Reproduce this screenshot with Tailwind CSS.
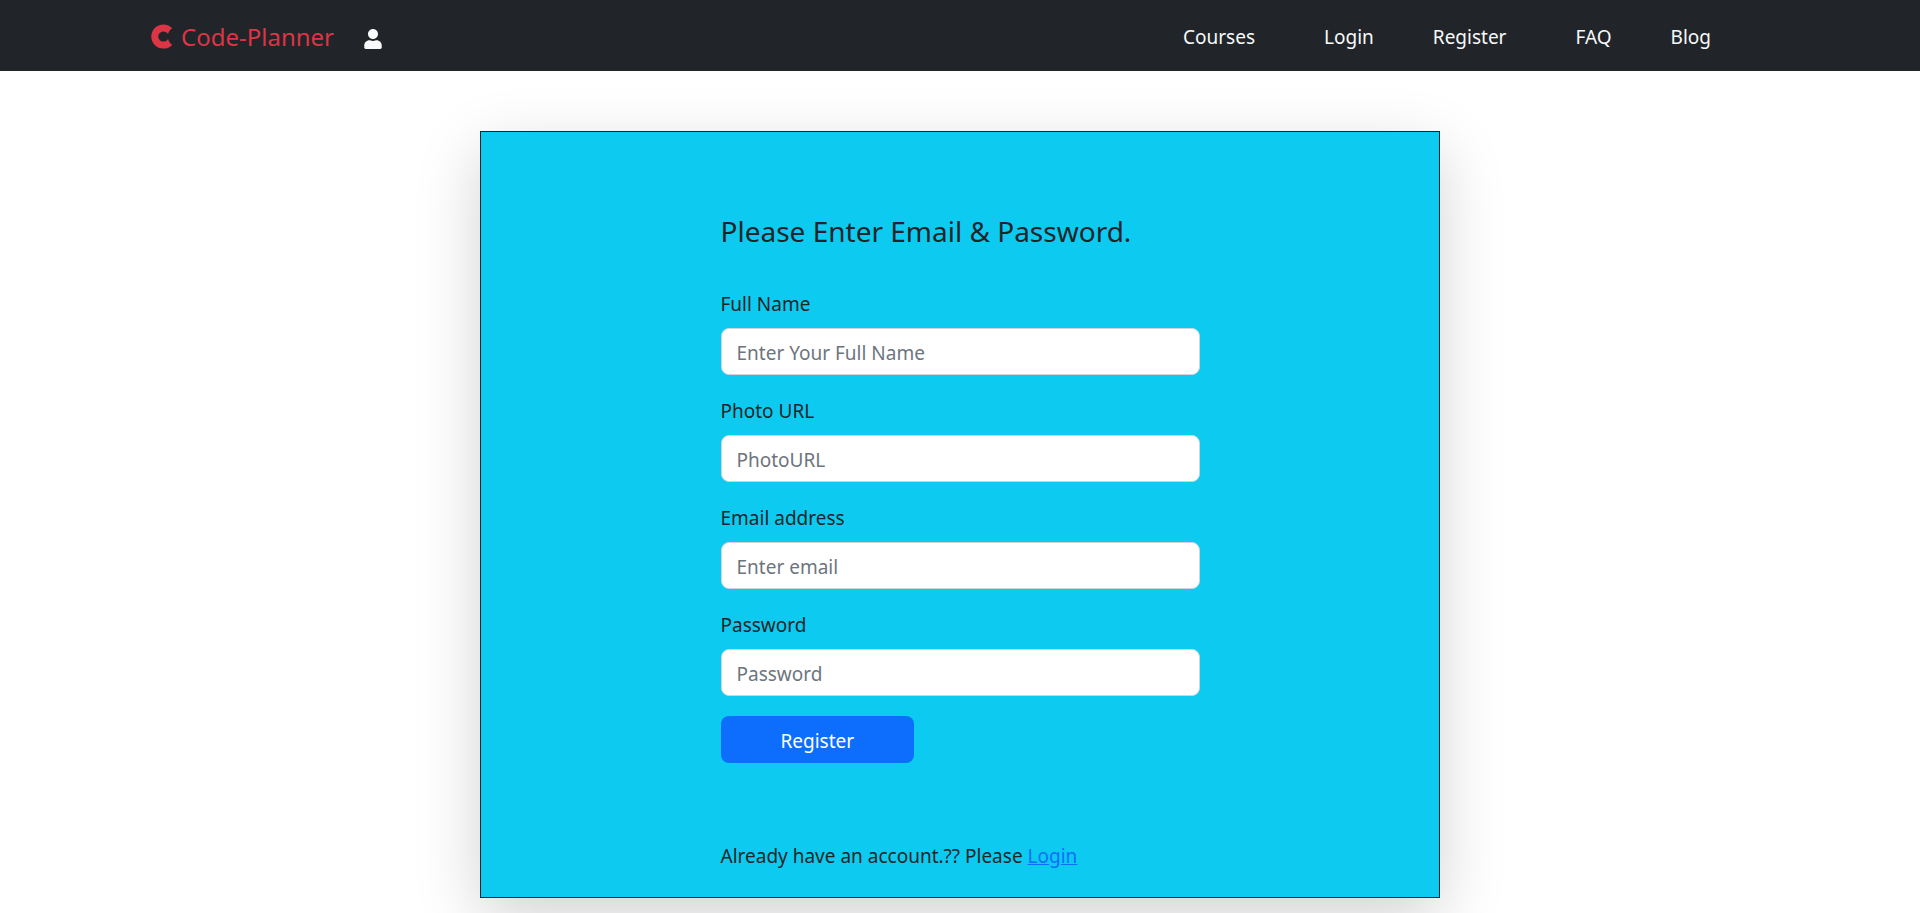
<!DOCTYPE html>
<html lang="en">
<head>
<meta charset="utf-8">
<meta name="viewport" content="width=device-width, initial-scale=1">
<title>Code-Planner</title>
<script src="https://cdn.jsdelivr.net/npm/@tailwindcss/browser@4"></script>
</head>
<body class="min-h-screen bg-white font-['Noto_Sans','Open_Sans',sans-serif] text-[19px] leading-8 text-[#212529]">
<header class="bg-[#212529]">
  <nav class="mx-auto flex h-[71px] max-w-[1650px] items-center justify-between px-4 pt-0.5">
    <div class="flex items-center gap-[30px]">
      <a href="#" class="flex items-center gap-2 text-2xl text-[#dc3545]">
        <svg class="h-[25px] w-[22px]" viewBox="0 0 440 512" fill="currentColor" aria-hidden="true"><path d="M344 305.5c-17.5 31.6-57.4 54.5-96 54.5-56.6 0-104-47.4-104-104s47.4-104 104-104c38.6 0 78.5 22.9 96 54.5 13.7-50.9 41.7-93.3 87-117.8C385.7 39.1 320.5 8 248 8 111 8 0 119 0 256s111 248 248 248c72.5 0 137.7-31.1 183-80.7-45.3-24.5-73.3-66.9-87-117.8z"/></svg>
        Code-Planner
      </a>
      <a href="#" aria-label="Profile" class="pt-1 text-[#f8f9fa]">
        <svg class="h-5 w-[18px]" viewBox="0 0 448 512" fill="currentColor" aria-hidden="true"><path d="M224 256c70.7 0 128-57.3 128-128S294.7 0 224 0 96 57.3 96 128s57.3 128 128 128zm89.6 32h-16.7c-22.2 10.2-46.9 16-72.9 16s-50.6-5.8-72.9-16h-16.7C60.2 288 0 348.2 0 422.4V464c0 26.5 21.5 48 48 48h352c26.5 0 48-21.5 48-48v-41.6c0-74.2-60.2-134.4-134.4-134.4z"/></svg>
      </a>
    </div>
    <div class="flex items-center pr-[58px] text-[#f8f9fa]">
      <a href="#" class="mr-[69px]">Courses</a>
      <a href="#" class="mr-[59px]">Login</a>
      <a href="#" class="mr-[69px]">Register</a>
      <a href="#" class="mr-[59px]">FAQ</a>
      <a href="#">Blog</a>
    </div>
  </nav>
</header>
<main class="mx-auto mt-[60px] w-1/2 border border-[#212529] bg-[#0dcaf0] pt-20 pb-[25px] shadow-[0_20px_60px_rgba(0,0,0,0.175)]">
  <div class="mx-auto w-1/2">
    <h1 class="mb-[38px] text-[28px] leading-[38px] whitespace-nowrap">Please Enter Email &amp; Password.</h1>
    <form class="flex flex-col gap-5">
      <div class="flex flex-col gap-2">
        <label for="name">Full Name</label>
        <input id="name" type="text" placeholder="Enter Your Full Name" class="h-[47px] w-full rounded-lg border border-[#ced4da] bg-white px-[15px] pt-0.5 placeholder:text-[#6c757d]">
      </div>
      <div class="flex flex-col gap-2">
        <label for="photo">Photo URL</label>
        <input id="photo" type="text" placeholder="PhotoURL" class="h-[47px] w-full rounded-lg border border-[#ced4da] bg-white px-[15px] pt-0.5 placeholder:text-[#6c757d]">
      </div>
      <div class="flex flex-col gap-2">
        <label for="email">Email address</label>
        <input id="email" type="email" placeholder="Enter email" class="h-[47px] w-full rounded-lg border border-[#ced4da] bg-white px-[15px] pt-0.5 placeholder:text-[#6c757d]">
      </div>
      <div class="flex flex-col gap-2">
        <label for="password">Password</label>
        <input id="password" type="password" placeholder="Password" class="h-[47px] w-full rounded-lg border border-[#ced4da] bg-white px-[15px] pt-0.5 placeholder:text-[#6c757d]">
      </div>
      <button type="submit" class="h-[47px] self-start rounded-lg bg-[#0d6efd] px-[60px] pt-0.5 text-white">Register</button>
    </form>
    <p class="mt-[77px]">Already have an account.?? Please <a href="#" class="text-[#0d6efd] underline">Login</a></p>
  </div>
</main>
</body>
</html>
